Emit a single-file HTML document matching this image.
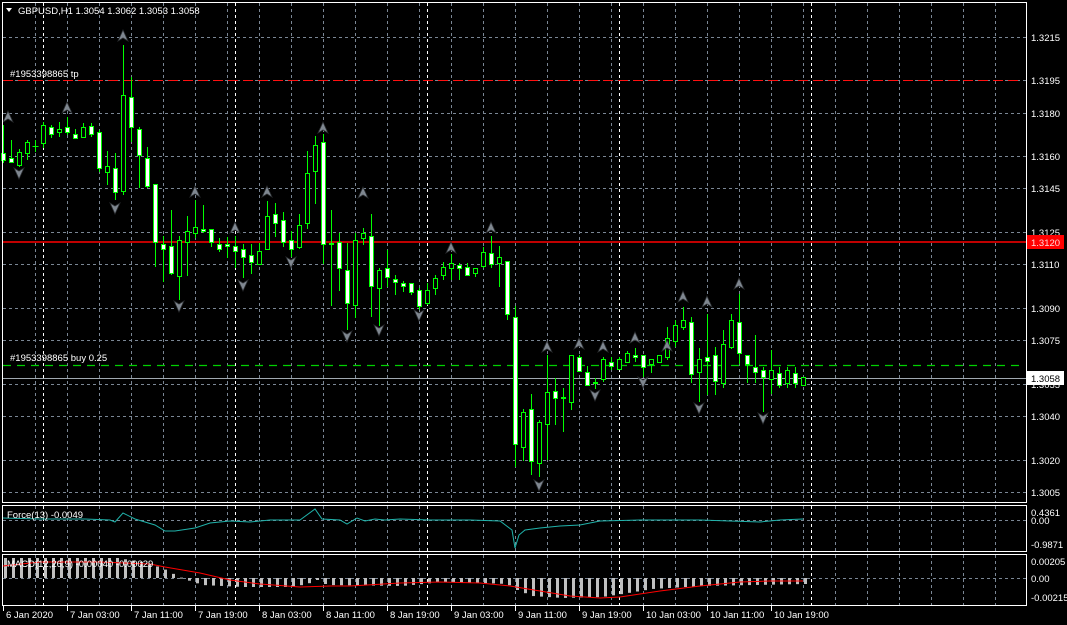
<!DOCTYPE html>
<html><head><meta charset="utf-8"><style>
html,body{margin:0;padding:0;background:#000;width:1067px;height:625px;overflow:hidden}
svg{display:block}
text{font-family:"Liberation Sans",sans-serif;font-size:9.5px;fill:#fff}
</style></head><body>
<svg id="s" width="1067" height="625" viewBox="0 0 1067 625" xmlns="http://www.w3.org/2000/svg">
<g id="grid"></g>
<g id="lines">
<line x1="3" y1="80.5" x2="1020" y2="80.5" stroke="#ff1010" stroke-dasharray="10,5"/>
<line x1="3" y1="242" x2="1026" y2="242" stroke="#ff0000" stroke-width="1.5"/>
<line x1="3" y1="365.5" x2="1020" y2="365.5" stroke="#00d000" stroke-width="1.2" stroke-dasharray="8,6"/>
<line x1="3" y1="378.5" x2="1026" y2="378.5" stroke="#a0a8b0"/>
</g>
<g id="ind"></g>
<g id="c"></g>
<g id="arr" fill="#7f8790" stroke="#2a2d30" stroke-width="0.8"></g>
<rect x="2.5" y="2.5" width="1024" height="500" fill="none" stroke="#fff"/>
<rect x="2.5" y="505.5" width="1024" height="46" fill="none" stroke="#fff"/>
<rect x="2.5" y="554.5" width="1024" height="51" fill="none" stroke="#fff"/>
<polygon points="6,8 12,8 9,12" fill="#fff"/>
<text x="18" y="14">GBPUSD,H1  1.3054 1.3062 1.3053 1.3058</text>
<text x="10" y="77">#1953398865 tp</text>
<text x="10" y="361">#1953398865 buy 0.25</text>
<text x="7" y="518">Force(13) -0.0049</text>
<text x="7" y="567">MACD(12,26,9) -0.00040 -0.00029</text>
<g id="ax">
<text x="1031" y="41">1.3215</text>
<text x="1031" y="84">1.3195</text>
<text x="1031" y="117">1.3180</text>
<text x="1031" y="160">1.3160</text>
<text x="1031" y="192">1.3145</text>
<text x="1031" y="236">1.3125</text>
<text x="1031" y="268">1.3110</text>
<text x="1031" y="312">1.3090</text>
<text x="1031" y="344">1.3075</text>
<text x="1031" y="388">1.3055</text>
<text x="1031" y="420">1.3040</text>
<text x="1031" y="464">1.3020</text>
<text x="1031" y="496">1.3005</text>
<rect x="1027" y="235" width="37" height="14" fill="#ff0000"/>
<text x="1031" y="246" style="fill:#ffd8d8">1.3120</text>
<rect x="1027" y="371" width="37" height="14" fill="#fff"/>
<text x="1031" y="382" style="fill:#000">1.3058</text>
<text x="1031" y="516">0.4361</text>
<text x="1031" y="524">0.00</text>
<text x="1031" y="548">-0.9871</text>
<text x="1031" y="565">0.00205</text>
<text x="1031" y="582">0.00</text>
<text x="1031" y="601">-0.00215</text>
</g>
<g id="tx"></g>
</svg>
<script>
var NS="http://www.w3.org/2000/svg";
function el(p,n,a){var e=document.createElementNS(NS,n);for(var k in a)e.setAttribute(k,a[k]);p.appendChild(e);return e;}
var g=document.getElementById('grid');
var hy=[37,80,113,156,188,232,264,308,340,384,416,460,492,520,578];
hy.forEach(function(y){el(g,'line',{x1:3,y1:y+.5,x2:1026,y2:y+.5,stroke:'#7a8694','stroke-dasharray':'3,3'});});
var panels=[[3,502],[506,551],[555,605]];
for(var k=1;k<32;k++){var x=3+32*k+.5;panels.forEach(function(p){el(g,'line',{x1:x,y1:p[0],x2:x,y2:p[1],stroke:'#7a8694','stroke-dasharray':'3,3'});});}
[43,235,427,619,811].forEach(function(x){panels.forEach(function(p){el(g,'line',{x1:x+.5,y1:p[0],x2:x+.5,y2:p[1],stroke:'#fff','stroke-dasharray':'3,3'});});});
var D=[[153,160,125,163],[158,162,140,163],[165,152,149,167],[153,142,140,160],[146,146,140,152],[143,125,122,148],[127,134,125,138],[132,129,122,137],[127,132,117,135],[134,138,129,138],[137,127,123,138],[126,134,123,137],[132,168,130,172],[172,166,151,185],[168,192,153,200],[191,95,45,195],[97,127,77,142],[129,155,127,188],[158,186,147,188],[184,242,184,267],[244,249,236,282],[246,273,210,275],[276,240,236,300],[242,231,216,276],[233,227,200,238],[229,231,205,233],[229,242,229,247],[244,249,238,252],[244,246,237,258],[246,251,236,268],[249,257,244,278],[255,262,244,274],[264,251,243,264],[249,216,201,249],[214,223,203,237],[220,242,212,247],[240,249,231,257],[247,225,214,249],[223,173,151,229],[171,145,136,204],[142,244,134,264],[243,244,210,306],[242,268,233,291],[270,303,243,330],[305,240,233,318],[238,233,228,245],[236,286,214,317],[288,270,268,326],[268,277,250,287],[279,282,275,295],[283,286,281,292],[283,292,283,295],[290,306,288,310],[303,290,283,305],[288,278,275,295],[275,267,262,280],[268,263,254,280],[265,268,263,280],[267,275,263,276],[273,268,268,277],[266,252,247,268],[253,264,236,268],[263,257,246,287],[261,314,261,320],[317,444,306,467],[447,412,409,461],[409,461,394,475],[463,422,420,477],[424,392,355,460],[391,398,378,425],[397,398,388,432],[402,355,355,410],[357,371,355,372],[372,385,366,386],[383,382,378,389],[379,359,357,382],[362,366,357,370],[369,359,357,370],[362,353,351,363],[355,357,348,362],[355,367,355,377],[364,359,359,373],[362,355,355,362],[357,338,327,360],[341,325,320,347],[327,320,307,330],[322,374,317,383],[372,359,348,402],[357,361,314,395],[355,381,347,395],[383,344,330,388],[347,320,314,349],[322,353,294,364],[355,364,355,383],[367,372,335,383],[370,377,367,412],[379,370,350,394],[373,385,367,388],[383,370,367,388],[373,383,367,388],[385,377,377,385]];
var c=document.getElementById('c');
D.forEach(function(d,i){var x=3+8*i+.5;var o=d[0],cl=d[1],h=d[2],l=d[3];var t=Math.min(o,cl),b=Math.max(o,cl);
el(c,'line',{x1:x,y1:h,x2:x,y2:t,stroke:'#00ff00'});el(c,'line',{x1:x,y1:b,x2:x,y2:l,stroke:'#00ff00'});
if(b-t<1){el(c,'line',{x1:x-3,y1:t+.5,x2:x+3,y2:t+.5,stroke:'#00ff00'});}
else el(c,'rect',{x:x-2,y:t+.5,width:4,height:b-t,fill:cl>o?'#fff':'#000',stroke:'#00ff00'});});
var a=document.getElementById('arr');
var up=[[8,117],[123,36],[67,108],[323,128],[195,192],[267,192],[363,193],[235,228],[491,228],[451,248],[547,347],[579,344],[603,347],[635,338],[667,346],[683,297],[707,302],[739,284]];
var dn=[[19,173],[115,208],[179,306],[243,285],[291,262],[347,336],[379,330],[419,315],[539,485],[595,395],[643,382],[699,408],[763,418]];
up.forEach(function(p){el(a,'polygon',{points:(p[0])+','+(p[1]-6)+' '+(p[0]+5)+','+(p[1]+5)+' '+p[0]+','+(p[1]+2)+' '+(p[0]-5)+','+(p[1]+5)});});
dn.forEach(function(p){el(a,'polygon',{points:(p[0])+','+(p[1]+6)+' '+(p[0]+5)+','+(p[1]-5)+' '+p[0]+','+(p[1]-2)+' '+(p[0]-5)+','+(p[1]-5)});});
var ind=document.getElementById('ind');
function hv(x){var P=[[0,558],[115,558],[140,562],[160,568],[175,576],[185,580],[200,585],[240,587],[290,587],[305,584],[315,580],[325,585],[400,586],[440,582],[480,583],[505,584],[515,590],[530,596],[560,598],[600,597],[620,594],[650,589],[700,586],[803,584]];
for(var i=1;i<P.length;i++){if(x<=P[i][0]){var t=(x-P[i-1][0])/(P[i][0]-P[i-1][0]);return P[i-1][1]+t*(P[i][1]-P[i-1][1]);}}return 584;}
for(var i=0;i<101;i++){var x=3+8*i;var y=hv(x);el(ind,'rect',{x:x+1,y:Math.min(y,578),width:3,height:Math.max(1,Math.abs(y-578)),fill:'#c0c0c0'});}
el(ind,'polyline',{points:'3,566 40,562 100,562 150,564 165,567 200,573 230,580 260,584 300,587 330,586 350,586 400,583 440,582 480,583 510,586 540,591 570,596 600,598 620,597 660,591 700,586 740,582 770,581 803,581',fill:'none',stroke:'#ff0000'});
el(ind,'polyline',{points:'3,518 40,519 85,519 110,520 115,522 123,513 135,519 155,525 165,531 175,531 195,528 210,523 230,521 250,522 270,520 300,520 315,509 322,519 340,520 347,524 357,518 365,521 375,519 385,520 400,519 430,520 470,520 500,521 512,530 515,548 519,535 525,530 540,528 560,526 580,525 600,521 640,520 700,520 760,522 780,520 803,519',fill:'none',stroke:'#20b2aa'});
var tx=document.getElementById('tx');
var L=['6 Jan 2020','7 Jan 03:00','7 Jan 11:00','7 Jan 19:00','8 Jan 03:00','8 Jan 11:00','8 Jan 19:00','9 Jan 03:00','9 Jan 11:00','9 Jan 19:00','10 Jan 03:00','10 Jan 11:00','10 Jan 19:00'];
L.forEach(function(s,i){var x=3+64*i;el(tx,'line',{x1:x+.5,y1:606,x2:x+.5,y2:611,stroke:'#fff'});var t=el(tx,'text',{x:x+3,y:618,'font-size':'9px'});t.textContent=s;});
</script>
</body></html>
